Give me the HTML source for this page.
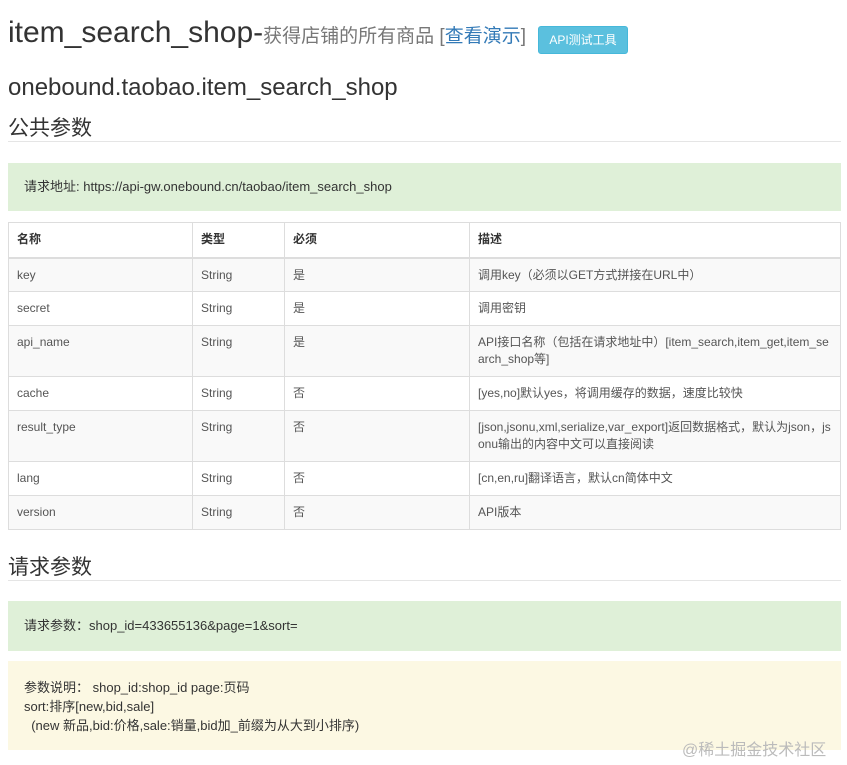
<!DOCTYPE html>
<html><head><meta charset="utf-8"><style>
*{box-sizing:border-box;margin:0;padding:0}
body{width:847px;height:765px;background:#fff;font-family:"Liberation Sans","Noto Sans CJK SC",sans-serif;color:#333;position:relative;overflow:hidden}
.a{position:absolute;white-space:nowrap}
table{position:absolute;left:8px;top:222px;width:833px;border-collapse:collapse;font-size:12px;line-height:17px}
td,th{border:1px solid #ddd;padding:0 8px;text-align:left;vertical-align:top;padding-top:8px}
th{font-weight:bold;height:35px;border-bottom:2px solid #ddd}
td{height:34px;color:#555}
tr.g td{background:#f9f9f9}
tr.t td{height:51px}
.hr{position:absolute;left:8px;width:833px;height:1px;background:#e5e5e5}
.box{position:absolute;left:8px;width:833px;font-size:13px;padding-left:16px}
</style></head><body>
<div class="a" style="left:8px;top:16px;font-size:30px;color:#333">item_search_shop-<span style="font-size:19px;color:#777">获得店铺的所有商品 [<span style="color:#337ab7">查看演示</span>]</span></div>
<div class="a" style="left:538px;top:26px;width:90px;height:28px;background:#5bc0de;border:1px solid #46b8da;border-radius:3px;color:#fff;font-size:12px;line-height:26px;text-align:center">API测试工具</div>
<div class="a" style="left:8px;top:74px;font-size:24px">onebound.taobao.item_search_shop</div>
<div class="a" style="left:8px;top:112px;font-size:21px">公共参数</div>
<div class="hr" style="top:141px"></div>
<div class="box" style="top:163px;height:48px;background:#dff0d8;line-height:48px">请求地址: https://api-gw.onebound.cn/taobao/item_search_shop</div>
<table>
<colgroup><col style="width:184px"><col style="width:92px"><col style="width:185px"><col></colgroup>
<tr><th>名称</th><th>类型</th><th>必须</th><th>描述</th></tr>
<tr class="g"><td>key</td><td>String</td><td>是</td><td>调用key（必须以GET方式拼接在URL中）</td></tr>
<tr><td>secret</td><td>String</td><td>是</td><td>调用密钥</td></tr>
<tr class="g t"><td>api_name</td><td>String</td><td>是</td><td>API接口名称（包括在请求地址中）[item_search,item_get,item_se<br>arch_shop等]</td></tr>
<tr><td>cache</td><td>String</td><td>否</td><td>[yes,no]默认yes，将调用缓存的数据，速度比较快</td></tr>
<tr class="g t"><td>result_type</td><td>String</td><td>否</td><td>[json,jsonu,xml,serialize,var_export]返回数据格式，默认为json，js<br>onu输出的内容中文可以直接阅读</td></tr>
<tr><td>lang</td><td>String</td><td>否</td><td>[cn,en,ru]翻译语言，默认cn简体中文</td></tr>
<tr class="g"><td>version</td><td>String</td><td>否</td><td>API版本</td></tr>
</table>
<div class="a" style="left:8px;top:551px;font-size:21px">请求参数</div>
<div class="hr" style="top:580px"></div>
<div class="box" style="top:601px;height:50px;background:#dff0d8;line-height:50px">请求参数：shop_id=433655136&amp;page=1&amp;sort=</div>
<div class="box" style="top:661px;height:89px;background:#fcf8e3;padding-top:17px;line-height:19px">参数说明： shop_id:shop_id page:页码<br>sort:排序[new,bid,sale]<br>&nbsp;&nbsp;(new 新品,bid:价格,sale:销量,bid加_前缀为从大到小排序)</div>
<div class="a" style="left:682px;top:736px;font-size:16px;color:#bbb">@稀土掘金技术社区</div>
</body></html>
